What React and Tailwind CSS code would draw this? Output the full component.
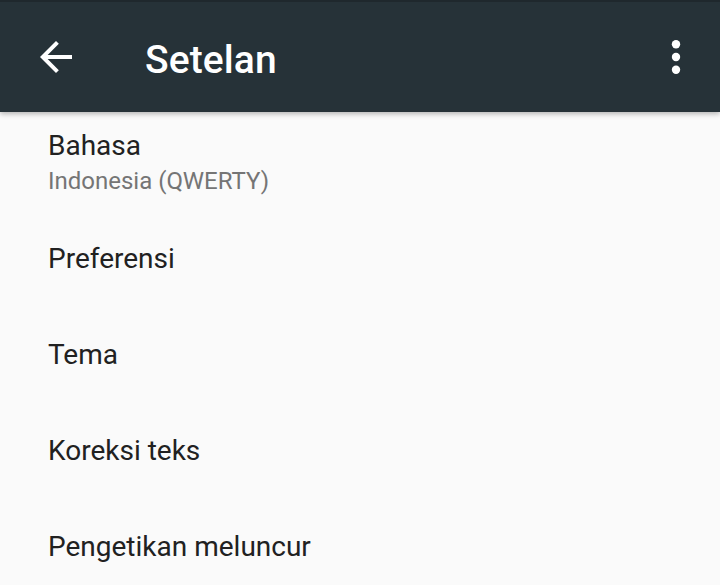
import React from "react";

const items = ["Preferensi", "Tema", "Koreksi teks", "Pengetikan meluncur"];

export default function App() {
  return (
    <div
      className="w-[720px] h-[585px] overflow-hidden bg-[#fafafa]"
      style={{ fontFamily: "Roboto, 'Noto Sans', sans-serif" }}
    >
      <header className="relative z-10 h-[112px] bg-[#263238] border-t-2 border-[#1f282d] shadow-[0_2px_5px_rgba(0,0,0,0.28)] flex items-center">
        <div className="ml-[32px] w-[48px] h-[48px] flex items-center justify-center">
          <svg width="48" height="48" viewBox="0 0 24 24" fill="#ffffff">
            <path d="M20 11H7.83l5.59-5.59L12 4l-8 8 8 8 1.41-1.41L7.83 13H20v-2z" />
          </svg>
        </div>
        <h1 className="ml-[65px] mt-[5px] text-white text-[39px] font-medium leading-[48px] tracking-[0.1px]">
          Setelan
        </h1>
        <div className="ml-auto mr-[20px] w-[48px] h-[48px] flex items-center justify-center">
          <svg width="48" height="48" viewBox="0 0 24 24" fill="#ffffff">
            <circle cx="12" cy="5.6" r="2.1" />
            <circle cx="12" cy="12" r="2.1" />
            <circle cx="12" cy="18.4" r="2.1" />
          </svg>
        </div>
      </header>
      <div className="pl-[48px]">
        <div className="pt-[17px]">
          <div className="text-[28px] leading-[33px] text-[#212121]">Bahasa</div>
          <div className="mt-[5px] text-[24px] leading-[28px] text-[#757575]">
            Indonesia (QWERTY)
          </div>
        </div>
        <div className="mt-[16px]">
          {items.map((t) => (
            <div key={t} className="h-[96px] text-[28px] leading-[96px] text-[#212121]">
              {t}
            </div>
          ))}
        </div>
      </div>
    </div>
  );
}
